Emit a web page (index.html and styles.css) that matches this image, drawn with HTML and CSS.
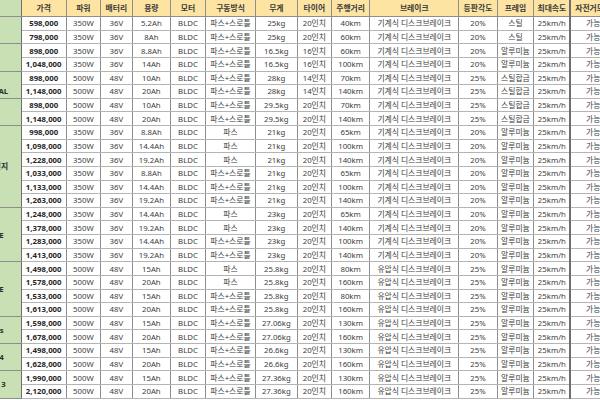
FILE: index.html
```html
<!DOCTYPE html>
<html lang="ko">
<head>
<meta charset="utf-8">
<title>전기자전거 사양 비교표</title>
<link rel="stylesheet" href="styles.css">
</head>
<body>
<div class="sheet">
<table class="specs">
<colgroup>
<col class="w-model"><col class="w-price"><col class="w-power"><col class="w-volt"><col class="w-cap"><col class="w-motor"><col class="w-drive"><col class="w-weight"><col class="w-tire"><col class="w-range"><col class="w-brake"><col class="w-grade"><col class="w-frame"><col class="w-speed"><col class="w-mode">
</colgroup>
<thead>
<tr><th class="model hid">모델명</th><th>가격</th><th>파워</th><th>배터리</th><th>용량</th><th>모터</th><th>구동방식</th><th>무게</th><th>타이어</th><th>주행거리</th><th>브레이크</th><th>등판각도</th><th>프레임</th><th>최대속도</th><th class="last">자전거모드</th></tr>
</thead>
<tbody>
<tr><td class="model hid" rowspan="2">클래식 20</td><td class="price">598,000</td><td>350W</td><td>36V</td><td>5.2Ah</td><td>BLDC</td><td>파스+스로틀</td><td>25kg</td><td>20인치</td><td>40km</td><td>기계식 디스크브레이크</td><td>20%</td><td>스틸</td><td>25km/h</td><td class="last">가능</td></tr>
<tr><td class="price">798,000</td><td>350W</td><td>36V</td><td>8Ah</td><td>BLDC</td><td>파스+스로틀</td><td>25kg</td><td>20인치</td><td>60km</td><td>기계식 디스크브레이크</td><td>20%</td><td>스틸</td><td>25km/h</td><td class="last">가능</td></tr>
<tr><td class="model hid" rowspan="2">폴딩 16</td><td class="price">898,000</td><td>350W</td><td>36V</td><td>8.8Ah</td><td>BLDC</td><td>파스+스로틀</td><td>16.5kg</td><td>16인치</td><td>60km</td><td>기계식 디스크브레이크</td><td>20%</td><td>알루미늄</td><td>25km/h</td><td class="last">가능</td></tr>
<tr><td class="price">1,048,000</td><td>350W</td><td>36V</td><td>14Ah</td><td>BLDC</td><td>파스+스로틀</td><td>16.5kg</td><td>16인치</td><td>100km</td><td>기계식 디스크브레이크</td><td>20%</td><td>알루미늄</td><td>25km/h</td><td class="last">가능</td></tr>
<tr><td class="model two" rowspan="2"><span class="lead">미니 14</span><br>DUAL</td><td class="price">898,000</td><td>500W</td><td>48V</td><td>10Ah</td><td>BLDC</td><td>파스+스로틀</td><td>28kg</td><td>14인치</td><td>70km</td><td>기계식 디스크브레이크</td><td>25%</td><td>스틸합금</td><td>25km/h</td><td class="last">가능</td></tr>
<tr><td class="price">1,148,000</td><td>500W</td><td>48V</td><td>20Ah</td><td>BLDC</td><td>파스+스로틀</td><td>28kg</td><td>14인치</td><td>140km</td><td>기계식 디스크브레이크</td><td>25%</td><td>스틸합금</td><td>25km/h</td><td class="last">가능</td></tr>
<tr><td class="model hid" rowspan="2">팻바이크</td><td class="price">898,000</td><td>500W</td><td>48V</td><td>10Ah</td><td>BLDC</td><td>파스+스로틀</td><td>29.5kg</td><td>20인치</td><td>70km</td><td>기계식 디스크브레이크</td><td>25%</td><td>스틸합금</td><td>25km/h</td><td class="last">가능</td></tr>
<tr><td class="price">1,148,000</td><td>500W</td><td>48V</td><td>20Ah</td><td>BLDC</td><td>파스+스로틀</td><td>29.5kg</td><td>20인치</td><td>140km</td><td>기계식 디스크브레이크</td><td>25%</td><td>스틸합금</td><td>25km/h</td><td class="last">가능</td></tr>
<tr><td class="model" rowspan="6">어반 레인지</td><td class="price">998,000</td><td>350W</td><td>36V</td><td>8.8Ah</td><td>BLDC</td><td>파스</td><td>21kg</td><td>20인치</td><td>65km</td><td>기계식 디스크브레이크</td><td>20%</td><td>알루미늄</td><td>25km/h</td><td class="last">가능</td></tr>
<tr><td class="price">1,098,000</td><td>350W</td><td>36V</td><td>14.4Ah</td><td>BLDC</td><td>파스</td><td>21kg</td><td>20인치</td><td>100km</td><td>기계식 디스크브레이크</td><td>20%</td><td>알루미늄</td><td>25km/h</td><td class="last">가능</td></tr>
<tr><td class="price">1,228,000</td><td>350W</td><td>36V</td><td>19.2Ah</td><td>BLDC</td><td>파스</td><td>21kg</td><td>20인치</td><td>140km</td><td>기계식 디스크브레이크</td><td>20%</td><td>알루미늄</td><td>25km/h</td><td class="last">가능</td></tr>
<tr><td class="price">1,033,000</td><td>350W</td><td>36V</td><td>8.8Ah</td><td>BLDC</td><td>파스+스로틀</td><td>21kg</td><td>20인치</td><td>65km</td><td>기계식 디스크브레이크</td><td>20%</td><td>알루미늄</td><td>25km/h</td><td class="last">가능</td></tr>
<tr><td class="price">1,133,000</td><td>350W</td><td>36V</td><td>14.4Ah</td><td>BLDC</td><td>파스+스로틀</td><td>21kg</td><td>20인치</td><td>100km</td><td>기계식 디스크브레이크</td><td>20%</td><td>알루미늄</td><td>25km/h</td><td class="last">가능</td></tr>
<tr><td class="price">1,263,000</td><td>350W</td><td>36V</td><td>19.2Ah</td><td>BLDC</td><td>파스+스로틀</td><td>21kg</td><td>20인치</td><td>140km</td><td>기계식 디스크브레이크</td><td>20%</td><td>알루미늄</td><td>25km/h</td><td class="last">가능</td></tr>
<tr><td class="model far" rowspan="4">스포츠 E</td><td class="price">1,248,000</td><td>350W</td><td>36V</td><td>14.4Ah</td><td>BLDC</td><td>파스</td><td>23kg</td><td>20인치</td><td>65km</td><td>기계식 디스크브레이크</td><td>20%</td><td>알루미늄</td><td>25km/h</td><td class="last">가능</td></tr>
<tr><td class="price">1,378,000</td><td>350W</td><td>36V</td><td>19.2Ah</td><td>BLDC</td><td>파스</td><td>23kg</td><td>20인치</td><td>140km</td><td>기계식 디스크브레이크</td><td>20%</td><td>알루미늄</td><td>25km/h</td><td class="last">가능</td></tr>
<tr><td class="price">1,283,000</td><td>350W</td><td>36V</td><td>14.4Ah</td><td>BLDC</td><td>파스+스로틀</td><td>23kg</td><td>20인치</td><td>100km</td><td>기계식 디스크브레이크</td><td>20%</td><td>알루미늄</td><td>25km/h</td><td class="last">가능</td></tr>
<tr><td class="price">1,413,000</td><td>350W</td><td>36V</td><td>19.2Ah</td><td>BLDC</td><td>파스+스로틀</td><td>23kg</td><td>20인치</td><td>140km</td><td>기계식 디스크브레이크</td><td>20%</td><td>알루미늄</td><td>25km/h</td><td class="last">가능</td></tr>
<tr><td class="model far" rowspan="4">투어링 E</td><td class="price">1,498,000</td><td>500W</td><td>48V</td><td>15Ah</td><td>BLDC</td><td>파스</td><td>25.8kg</td><td>20인치</td><td>80km</td><td>유압식 디스크브레이크</td><td>25%</td><td>알루미늄</td><td>25km/h</td><td class="last">가능</td></tr>
<tr><td class="price">1,578,000</td><td>500W</td><td>48V</td><td>20Ah</td><td>BLDC</td><td>파스</td><td>25.8kg</td><td>20인치</td><td>160km</td><td>유압식 디스크브레이크</td><td>25%</td><td>알루미늄</td><td>25km/h</td><td class="last">가능</td></tr>
<tr><td class="price">1,533,000</td><td>500W</td><td>48V</td><td>15Ah</td><td>BLDC</td><td>파스+스로틀</td><td>25.8kg</td><td>20인치</td><td>80km</td><td>유압식 디스크브레이크</td><td>25%</td><td>알루미늄</td><td>25km/h</td><td class="last">가능</td></tr>
<tr><td class="price">1,613,000</td><td>500W</td><td>48V</td><td>20Ah</td><td>BLDC</td><td>파스+스로틀</td><td>25.8kg</td><td>20인치</td><td>160km</td><td>유압식 디스크브레이크</td><td>25%</td><td>알루미늄</td><td>25km/h</td><td class="last">가능</td></tr>
<tr><td class="model far" rowspan="2">크루저 s</td><td class="price">1,598,000</td><td>500W</td><td>48V</td><td>15Ah</td><td>BLDC</td><td>파스+스로틀</td><td>27.06kg</td><td>20인치</td><td>130km</td><td>유압식 디스크브레이크</td><td>25%</td><td>알루미늄</td><td>25km/h</td><td class="last">가능</td></tr>
<tr><td class="price">1,678,000</td><td>500W</td><td>48V</td><td>20Ah</td><td>BLDC</td><td>파스+스로틀</td><td>27.06kg</td><td>20인치</td><td>160km</td><td>유압식 디스크브레이크</td><td>25%</td><td>알루미늄</td><td>25km/h</td><td class="last">가능</td></tr>
<tr><td class="model far" rowspan="2">마운틴 4</td><td class="price">1,498,000</td><td>500W</td><td>48V</td><td>15Ah</td><td>BLDC</td><td>파스+스로틀</td><td>26.6kg</td><td>20인치</td><td>130km</td><td>유압식 디스크브레이크</td><td>25%</td><td>알루미늄</td><td>25km/h</td><td class="last">가능</td></tr>
<tr><td class="price">1,628,000</td><td>500W</td><td>48V</td><td>20Ah</td><td>BLDC</td><td>파스+스로틀</td><td>26.6kg</td><td>20인치</td><td>160km</td><td>유압식 디스크브레이크</td><td>25%</td><td>알루미늄</td><td>25km/h</td><td class="last">가능</td></tr>
<tr><td class="model mid" rowspan="2">마운틴 3</td><td class="price">1,990,000</td><td>500W</td><td>48V</td><td>15Ah</td><td>BLDC</td><td>파스+스로틀</td><td>27.36kg</td><td>20인치</td><td>130km</td><td>유압식 디스크브레이크</td><td>25%</td><td>알루미늄</td><td>25km/h</td><td class="last">가능</td></tr>
<tr><td class="price">2,120,000</td><td>500W</td><td>48V</td><td>20Ah</td><td>BLDC</td><td>파스+스로틀</td><td>27.36kg</td><td>20인치</td><td>160km</td><td>유압식 디스크브레이크</td><td>25%</td><td>알루미늄</td><td>25km/h</td><td class="last">가능</td></tr>
</tbody>
</table>
</div>
</body>
</html>
```

FILE: styles.css
```css
html, body {
  margin: 0;
  padding: 0;
  background: #ffffff;
}

body {
  font-family: "Noto Sans", "Noto Sans CJK KR", sans-serif;
}

.sheet {
  width: 600px;
  height: 400px;
  overflow: hidden;
}

.specs {
  border-collapse: collapse;
  table-layout: fixed;
  width: 674.3px;
  margin-left: -59.3px;
  font-size: 7.8px;
  color: #3d3d3d;
}

.w-model { width: 80px; }
.w-price { width: 45px; }
.w-power { width: 34.3px; }
.w-volt { width: 31.7px; }
.w-cap { width: 38.3px; }
.w-motor { width: 35px; }
.w-drive { width: 50px; }
.w-weight { width: 41.7px; }
.w-tire { width: 34.3px; }
.w-range { width: 38.3px; }
.w-brake { width: 89px; }
.w-grade { width: 38.4px; }
.w-frame { width: 36.6px; }
.w-speed { width: 36.7px; }
.w-mode { width: 45px; }

.specs th,
.specs td {
  padding: 0;
  text-align: center;
  vertical-align: middle;
  white-space: nowrap;
  overflow: hidden;
  line-height: 10px;
  border-top: 1px solid #b4b4b4;
  border-bottom: 1px solid #b4b4b4;
  border-left: 1px solid #8e8e8e;
  border-right: 1px solid #8e8e8e;
  box-sizing: border-box;
}

.specs th {
  height: 16.5px;
  background: #fde4a3;
  font-weight: 700;
  color: #3a3a3a;
  border-top: none;
  border-bottom: 1px solid #8e8e8e;
}

.specs td {
  height: 13.64px;
}

.specs .model {
  background: #c8e0b4;
  font-weight: 700;
  font-size: 7.8px;
  color: #2e2e2e;
  text-align: right;
  padding-right: 12.5px;
  border-right: 1px solid #6f6f6f;
  border-bottom: 1px solid #8e8e8e;
}

.specs .model.hid {
  padding-right: 26px;
}

.specs .model.two {
  line-height: 11px;
  padding-top: 2px;
}

.specs .model .lead {
  display: inline-block;
  margin-right: 16px;
}

.specs .model.far {
  padding-right: 17px;
}

.specs .model.mid {
  padding-right: 15px;
}

.specs .price {
  font-weight: 700;
  color: #262626;
}

.specs .last {
  border-left: 2px solid #6f6f6f;
}
```
